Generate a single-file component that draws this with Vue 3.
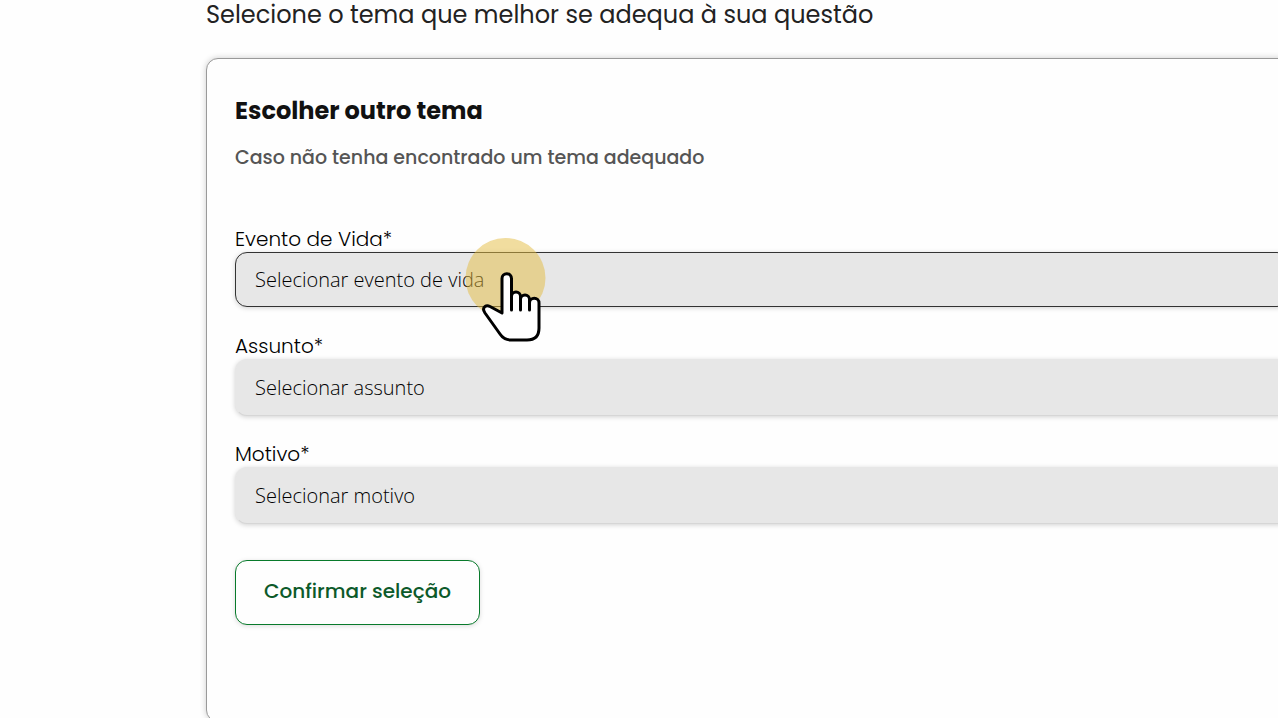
<script setup>
import { ref } from 'vue'

const fields = ref([
  { id: 'evento', label: 'Evento de Vida*', placeholder: 'Selecionar evento de vida', active: true },
  { id: 'assunto', label: 'Assunto*', placeholder: 'Selecionar assunto', active: false },
  { id: 'motivo', label: 'Motivo*', placeholder: 'Selecionar motivo', active: false }
])
</script>

<template>
  <main class="page">
    <h1 class="heading">Selecione o tema que melhor se adequa à sua questão</h1>
    <form class="card" @submit.prevent>
      <h2 class="title">Escolher outro tema</h2>
      <p class="subtitle">Caso não tenha encontrado um tema adequado</p>
      <div class="fields">
        <div v-for="field in fields" :key="field.id" class="field">
          <label class="label" :for="field.id">{{ field.label }}</label>
          <select :id="field.id" class="select" :class="{ active: field.active }">
            <option>{{ field.placeholder }}</option>
          </select>
          <div v-if="field.active" class="pointer" aria-hidden="true">
            <svg width="84" height="108" viewBox="0 0 84 108">
              <circle cx="41.500" cy="41" r="40" fill="#e3bb3f" fill-opacity=".5" />
              <path
                d="M38 76V41.500a4.500 4.500 0 0 1 9.500 0V73V59.500a4.500 4.500 0 0 1 9 0V73V62.500a4.500 4.500 0 0 1 9 0V73V66a4.700 4.700 0 0 1 9.500 0V91q0 12-12 12H47q-7 0-11-6L21 76q-3-4.500 0-6.500q2-1.500 5 0Z"
                fill="#fff" stroke="#000" stroke-width="3" stroke-linejoin="round" stroke-linecap="round"
              />
            </svg>
          </div>
        </div>
      </div>
      <button class="confirm" type="submit">Confirmar seleção</button>
    </form>
  </main>
</template>

<style>
body {
  background: #fefefe;
}
#app {
  overflow: hidden;
}
</style>

<style scoped>
.page {
  padding-left: 206px;
  color: #111;
  font-family: Poppins, Inter, "Open Sans", sans-serif;
}
.heading {
  margin: 0 0 28px;
  font-size: 24px;
  line-height: 30px;
  font-weight: 400;
  color: #222;
}
.card {
  box-sizing: border-box;
  margin-right: -40px;
  padding: 34px 28px 96px;
  border: 1px solid #999;
  border-radius: 12px;
  box-shadow: 0 0 6px rgba(0, 0, 0, 0.2);
  background: #fefefe;
}
.title {
  margin: 0 0 15px;
  font-size: 24px;
  line-height: 36px;
  font-weight: 700;
}
.subtitle {
  margin: 0 0 53px;
  font-size: 19px;
  line-height: 28px;
  font-weight: 500;
  color: #555;
}
.fields {
  display: flex;
  flex-direction: column;
  gap: 24px;
}
.field {
  position: relative;
  display: flex;
  flex-direction: column;
}
.label {
  padding-top: 2px;
  font-size: 20px;
  line-height: 25px;
  font-weight: 300;
  color: #000;
}
.select {
  appearance: none;
  box-sizing: border-box;
  width: 100%;
  height: 57px;
  padding: 0 19px 1px;
  border: 1px solid #e7e7e7;
  border-bottom-color: #d6d6d6;
  border-radius: 12px;
  outline: none;
  background: #e7e7e7;
  box-shadow: 0 1px 5px rgba(0, 0, 0, 0.18);
  color: #000;
  font-family: "Open Sans", sans-serif;
  font-size: 20px;
  font-weight: 300;
}
.select.active {
  height: 55px;
  padding-bottom: 0;
  margin-bottom: 1px;
  border-color: #333;
}
.pointer {
  position: absolute;
  left: 229px;
  top: 12px;
  pointer-events: none;
}
.pointer svg {
  display: block;
}
.confirm {
  margin-top: 36px;
  height: 65px;
  padding: 0 28px 3px;
  border: 1px solid #087a2b;
  border-radius: 12px;
  background: #fefefe;
  box-shadow: 0 1px 5px rgba(0, 0, 0, 0.14);
  color: #0c5a2a;
  font-family: inherit;
  font-size: 20px;
  font-weight: 500;
}
</style>
